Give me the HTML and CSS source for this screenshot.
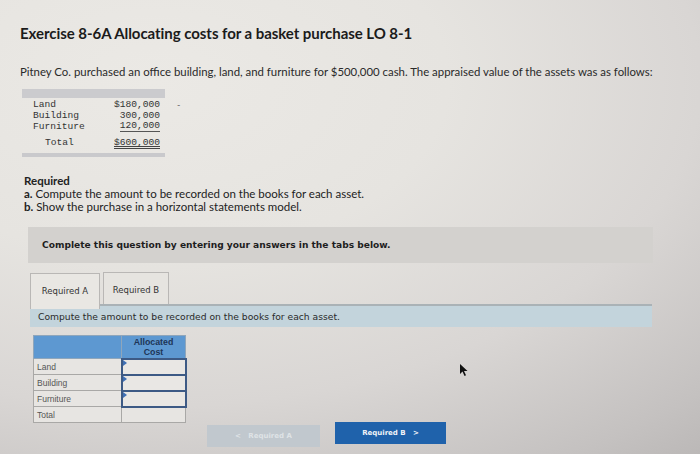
FILE: index.html
```html
<!DOCTYPE html>
<html>
<head>
<meta charset="utf-8">
<link rel="stylesheet" href="styles.css">
</head>
<body>
<div class="page">
  <h1 class="title">Exercise 8-6A Allocating costs for a basket purchase LO 8-1</h1>
  <p class="intro">Pitney Co. purchased an office building, land, and furniture for $500,000 cash. The appraised value of the assets was as follows:</p>

  <div class="figure-row">
    <div class="figure">
      <div class="fig-bar"></div>
      <div class="fig-rows">
        <div class="fig-row"><span class="fig-label">Land</span><span class="fig-amt">$180,000</span></div>
        <div class="fig-row"><span class="fig-label">Building</span><span class="fig-amt">300,000</span></div>
        <div class="fig-row"><span class="fig-label">Furniture</span><span class="fig-amt under">120,000</span></div>
        <div class="fig-row total"><span class="fig-label indent">Total</span><span class="fig-amt dbl">$600,000</span></div>
      </div>
      <div class="fig-bar bottom"></div>
    </div>
    <span class="dash">-</span>
  </div>

  <div class="required">
    <div class="req-head">Required</div>
    <div><b>a.</b> Compute the amount to be recorded on the books for each asset.</div>
    <div><b>b.</b> Show the purchase in a horizontal statements model.</div>
  </div>

  <div class="banner">Complete this question by entering your answers in the tabs below.</div>

  <div class="tabs">
    <div class="tab active">Required A</div>
    <div class="tab">Required B</div>
  </div>
  <div class="instr">Compute the amount to be recorded on the books for each asset.</div>

  <div class="bottom-row">
    <table class="alloc">
      <tr class="hdr"><th class="c1"></th><th class="c2">Allocated<br>Cost</th></tr>
      <tr><td class="c1">Land</td><td class="c2 inp"><span class="flag"></span></td></tr>
      <tr><td class="c1">Building</td><td class="c2 inp"><span class="flag"></span></td></tr>
      <tr><td class="c1">Furniture</td><td class="c2 inp"><span class="flag"></span></td></tr>
      <tr><td class="c1">Total</td><td class="c2"></td></tr>
    </table>
    <div class="cursor">
      <svg width="10" height="14" viewBox="0 0 10 14"><path d="M1 1 L1 11 L3.5 8.5 L5.5 13 L7 12.3 L5 8 L8.5 8 Z" fill="#111"/></svg>
    </div>
  </div>

  <div class="nav">
    <div class="btn prev">&lt;&nbsp;&nbsp; Required A</div>
    <div class="btn next">Required B &nbsp;&nbsp;&gt;</div>
  </div>
</div>
</body>
</html>
```

FILE: styles.css
```css
html, body {
  margin: 0;
  padding: 0;
  width: 700px;
  height: 454px;
  overflow: hidden;
}
body {
  background: radial-gradient(ellipse 120% 110% at 22% 18%, #ebe9e5 0%, #e6e4e0 35%, #d9d6d4 65%, #c4c1c0 90%, #bab7b6 100%);
  font-family: Lato, "Open Sans", sans-serif;
  color: #222;
}
.page {
  padding: 24px 0 0 20px;
}
.title {
  margin: 0;
  font-family: Lato, sans-serif;
  font-weight: 700;
  font-size: 15px;
  line-height: 18px;
  color: #1b1b1b;
  letter-spacing: -0.05px;
}
.intro {
  margin: 23px 0 0 0;
  font-size: 11.4px;
  line-height: 14px;
  color: #2a2a2a;
}
.figure-row {
  display: flex;
  align-items: flex-start;
  margin-top: 10px;
  margin-left: 2px;
}
.figure {
  width: 143px;
  font-family: "Liberation Mono", monospace;
  font-size: 9.6px;
  color: #333;
}
.fig-bar {
  height: 9px;
  background: #cbcbce;
}
.fig-bar.bottom {
  height: 4px;
  margin-top: 4px;
  background: #c9c9cc;
}
.fig-rows {
  padding: 1px 5px 0 11px;
}
.fig-row {
  display: flex;
  justify-content: space-between;
  line-height: 11px;
  height: 11px;
}
.fig-row.total {
  margin-top: 5px;
  line-height: 12px;
  height: 12px;
}
.indent { padding-left: 12px; }
.fig-amt.under { border-bottom: 1px solid #555; line-height: 10px; }
.fig-amt.dbl { border-bottom: 3px double #444; padding-bottom: 1px; }
.dash {
  margin: 10px 0 0 12px;
  font-size: 9px;
  color: #666;
}
.required {
  margin: 17px 0 0 4px;
  font-size: 11.5px;
  line-height: 13px;
  color: #222;
}
.req-head { font-weight: 700; }
.banner {
  margin: 14px 0 0 8px;
  width: 625px;
  height: 36px;
  padding-left: 14px;
  box-sizing: border-box;
  display: flex;
  align-items: center;
  background: #d3d1ce;
  font-family: "DejaVu Sans", Verdana, sans-serif;
  font-weight: 700;
  font-size: 9.1px;
  color: #1e1e1e;
}
.tabs {
  display: flex;
  align-items: flex-start;
  gap: 3px;
  margin: 9px 0 0 10px;
  height: 32px;
  position: relative;
  z-index: 1;
}
.tab {
  font-family: "DejaVu Sans", Verdana, sans-serif;
  font-size: 8.5px;
  color: #333;
  border: 1px solid #b9b7b5;
  border-bottom: none;
  background: #e6e4e0;
  box-sizing: border-box;
  display: flex;
  align-items: center;
  justify-content: center;
}
.tab.active {
  width: 70px;
  height: 36px;
  margin-top: 1px;
  padding-bottom: 2px;
  background: #e9e7e3;
}
.tab:not(.active) {
  width: 66px;
  height: 32px;
  padding-top: 2px;
}
.instr {
  margin-left: 10px;
  width: 622px;
  height: 23px;
  box-sizing: border-box;
  border-top: 2px solid #aab2b6;
  background: #c3d4dc;
  padding-left: 8px;
  display: flex;
  align-items: center;
  font-family: "DejaVu Sans", Verdana, sans-serif;
  font-size: 9.2px;
  color: #2a2a2a;
}
.bottom-row {
  display: flex;
  margin: 8px 0 0 13px;
  align-items: flex-start;
}
.alloc {
  border-collapse: collapse;
  font-family: "Liberation Sans", Arial, sans-serif;
  font-size: 8.5px;
}
.alloc td, .alloc th {
  padding: 0;
  box-sizing: border-box;
}
.alloc .c1 { width: 88px; }
.alloc .c2 { width: 64px; }
.alloc tr.hdr th {
  height: 23px;
  background: #5d98d1;
  border: 1px solid #8fa6bb;
  color: #1d3557;
  font-weight: 700;
  font-size: 8.8px;
  line-height: 10px;
  vertical-align: top;
  padding-top: 1px;
}
.alloc td {
  height: 16px;
  border: 1px solid #a9a8a6;
  background: #e7e5e2;
  color: #555;
}
.alloc td.c1 { padding-left: 3px; }
.alloc td.inp {
  border: 2px solid #3d5a85;
  position: relative;
  background: #e9e7e4;
}
.flag {
  position: absolute;
  left: 0;
  top: 0;
  width: 0;
  height: 0;
  border-top: 3px solid transparent;
  border-bottom: 3px solid transparent;
  border-left: 4px solid #3f6fb4;
}
.cursor {
  margin: 26px 0 0 272px;
}
.nav {
  display: flex;
  align-items: flex-start;
  gap: 15px;
  margin: -1px 0 0 187px;
}
.btn {
  height: 22px;
  display: flex;
  align-items: center;
  justify-content: center;
  font-family: "DejaVu Sans", Verdana, sans-serif;
  font-weight: 700;
  font-size: 7px;
}
.btn.prev {
  width: 113px;
  margin-top: 3px;
  background: #c1c8ce;
  color: #dfe3e6;
}
.btn.next {
  width: 111px;
  background: #1f62ab;
  color: #f2f4f8;
}
```
